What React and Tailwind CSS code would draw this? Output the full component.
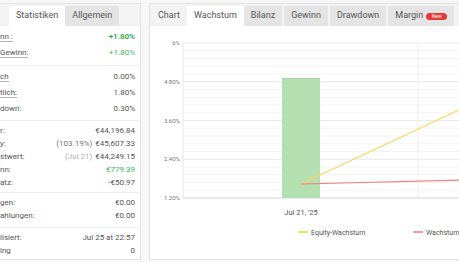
import React from "react"

const sections = [
  [
    { label: "nn :", value: "+1.80%", tip: true, cls: "text-[#22a83a] font-semibold" },
    { label: "Gewinn:", value: "+1.80%", tip: true, cls: "text-[#3dba52]" },
  ],
  [
    { label: "ch", value: "0.00%", tip: true },
    { label: "tlich:", value: "1.80%", tip: true },
    { label: "down:", value: "0.30%" },
  ],
  [
    { label: "r:", value: "€44,196.84" },
    { label: "y:", pre: "(103.19%)", preCls: "text-[#777]", value: "€45,607.33" },
    { label: "stwert:", pre: "(Jul 21)", preCls: "text-[#b0b0b0]", value: "€44,249.15" },
    { label: "nn:", value: "€779.39", cls: "text-[#3dba52]" },
    { label: "atz:", value: "-€50.97" },
  ],
  [
    { label: "gen:", value: "€0.00" },
    { label: "ahlungen:", value: "€0.00" },
  ],
  [
    { label: "lisiert:", value: "Jul 25 at 22:57" },
    { label: "ing", value: "0" },
  ],
]

const sectionStyle = [
  { box: "pt-[3px] pb-[4px] border-b border-[#eeeeee]", row: "h-[16px]" },
  { box: "pt-[3px] pb-[3px] border-b border-[#eeeeee]", row: "h-[16px]" },
  { box: "pt-[3px] pb-[3px] border-b border-[#eeeeee]", row: "h-[13px]" },
  { box: "pt-[3px] pb-[4px] border-b border-[#eeeeee]", row: "h-[13.5px]" },
  { box: "pt-[3px]", row: "h-[13.5px]" },
]

function StatsPanel() {
  return (
    <div className="w-[142px] -ml-px shrink-0 h-[257px] bg-white border border-[#e3e3e3] flex flex-col">
      <div className="h-[22px] bg-[#f3f3f3] pt-[2px] pl-[9px] flex text-[9px] text-[#555]">
        <div className="h-[20px] px-[7px] flex items-center bg-white">Statistiken</div>
        <div className="h-[20px] px-[7px] flex items-center bg-[#e4e4e4]">Allgemein</div>
      </div>
      {sections.map((rows, si) => (
        <div key={si} className={sectionStyle[si].box}>
          {rows.map((r) => (
            <div
              key={r.label}
              className={`flex justify-between items-center pr-[5px] text-[8px] text-[#555] ${sectionStyle[si].row}`}
            >
              <span className={r.tip ? "border-b border-[#b5b5b5] leading-[9px]" : ""}>{r.label}</span>
              <span className={r.cls || "text-[#555]"}>
                {r.pre && <span className={`${r.preCls} mr-[3px]`}>{r.pre}</span>}
                {r.value}
              </span>
            </div>
          ))}
        </div>
      ))}
    </div>
  )
}

function Chart() {
  const left = 33
  const top = 17
  const bottom = 172
  const step = 38.75
  const majors = [0, 1, 2, 3, 4].map((i) => top + i * step)
  const minors = []
  for (let i = 0; i < 20; i++) {
    if (i % 5 !== 0) minors.push(top + i * (step / 5))
  }
  const labels = ["6%", "4.80%", "3.60%", "2.40%", "1.20%"]

  return (
    <svg width="328" height="232" className="block">
      {minors.map((y) => (
        <line key={y} x1={left} x2="328" y1={y} y2={y} stroke="#f3f3f3" strokeWidth="1" />
      ))}
      {majors.map((y) => (
        <line key={y} x1={left} x2="328" y1={y} y2={y} stroke="#e9e9e9" strokeWidth="1" />
      ))}
      <line x1={left} x2={left} y1={top} y2={bottom} stroke="#e6e6e6" />
      <line x1="268" x2="268" y1={top} y2={bottom} stroke="#eeeeee" />
      <line x1={left} x2="328" y1={bottom} y2={bottom} stroke="#e2e2e2" />
      {labels.map((t, i) => (
        <text key={t} x="30" y={majors[i] + 2} textAnchor="end" fontSize="6" fill="#777" fontFamily="Roboto, sans-serif">
          {t}
        </text>
      ))}
      <rect x="132" y="52" width="38" height={bottom - 52} fill="#b3dfb1" />
      <line x1="132" x2="170" y1="52.5" y2="52.5" stroke="#a3d6a1" />
      <line x1="151" y1="158" x2="330" y2="74" stroke="#ffd65c" strokeWidth="1.2" />
      <line x1="151" y1="158" x2="330" y2="153.5" stroke="#f0807a" strokeWidth="1.2" />
      <text x="151" y="189" textAnchor="middle" fontSize="7.5" fill="#555" fontFamily="Roboto, sans-serif">
        Jul 21, '25
      </text>
      <line x1="148" x2="158" y1="206" y2="206" stroke="#ffd65c" strokeWidth="2" />
      <text x="161" y="208.5" fontSize="7" fill="#555" fontFamily="Roboto, sans-serif">
        Equity-Wachstum
      </text>
      <line x1="263" x2="273" y1="206" y2="206" stroke="#f29a95" strokeWidth="2" />
      <text x="276" y="208.5" fontSize="7" fill="#555" fontFamily="Roboto, sans-serif">
        Wachstum
      </text>
    </svg>
  )
}

function ChartPanel() {
  const tabs = ["Bilanz", "Gewinn", "Drawdown"]
  return (
    <div className="w-[330px] shrink-0 h-[257px] bg-white border border-[#e3e3e3] flex flex-col">
      <div className="h-[22px] bg-[#f3f3f3] pt-[2px] pl-px flex text-[9px] text-[#555]">
        <div className="h-[20px] px-[7px] flex items-center">Chart</div>
        <div className="h-[20px] px-[7px] flex items-center bg-white">Wachstum</div>
        {tabs.map((t, i) => (
          <div key={t} className={`h-[20px] px-[7px] flex items-center bg-[#e4e4e4] ${i > 0 ? "ml-[2px]" : ""}`}>
            {t}
          </div>
        ))}
        <div className="h-[20px] px-[7px] ml-[2px] flex items-center gap-[3px] bg-[#e4e4e4]">
          Margin
          <span className="h-[7px] w-[21px] rounded-full bg-[#e53935] text-white text-[5px] leading-[7px] text-center">
            New
          </span>
        </div>
      </div>
      <Chart />
    </div>
  )
}

export default function App() {
  return (
    <div className="w-[459px] h-[262px] overflow-hidden bg-[#f7f7f7] flex gap-2 pt-[3px] font-[Roboto,sans-serif]">
      <StatsPanel />
      <ChartPanel />
    </div>
  )
}
